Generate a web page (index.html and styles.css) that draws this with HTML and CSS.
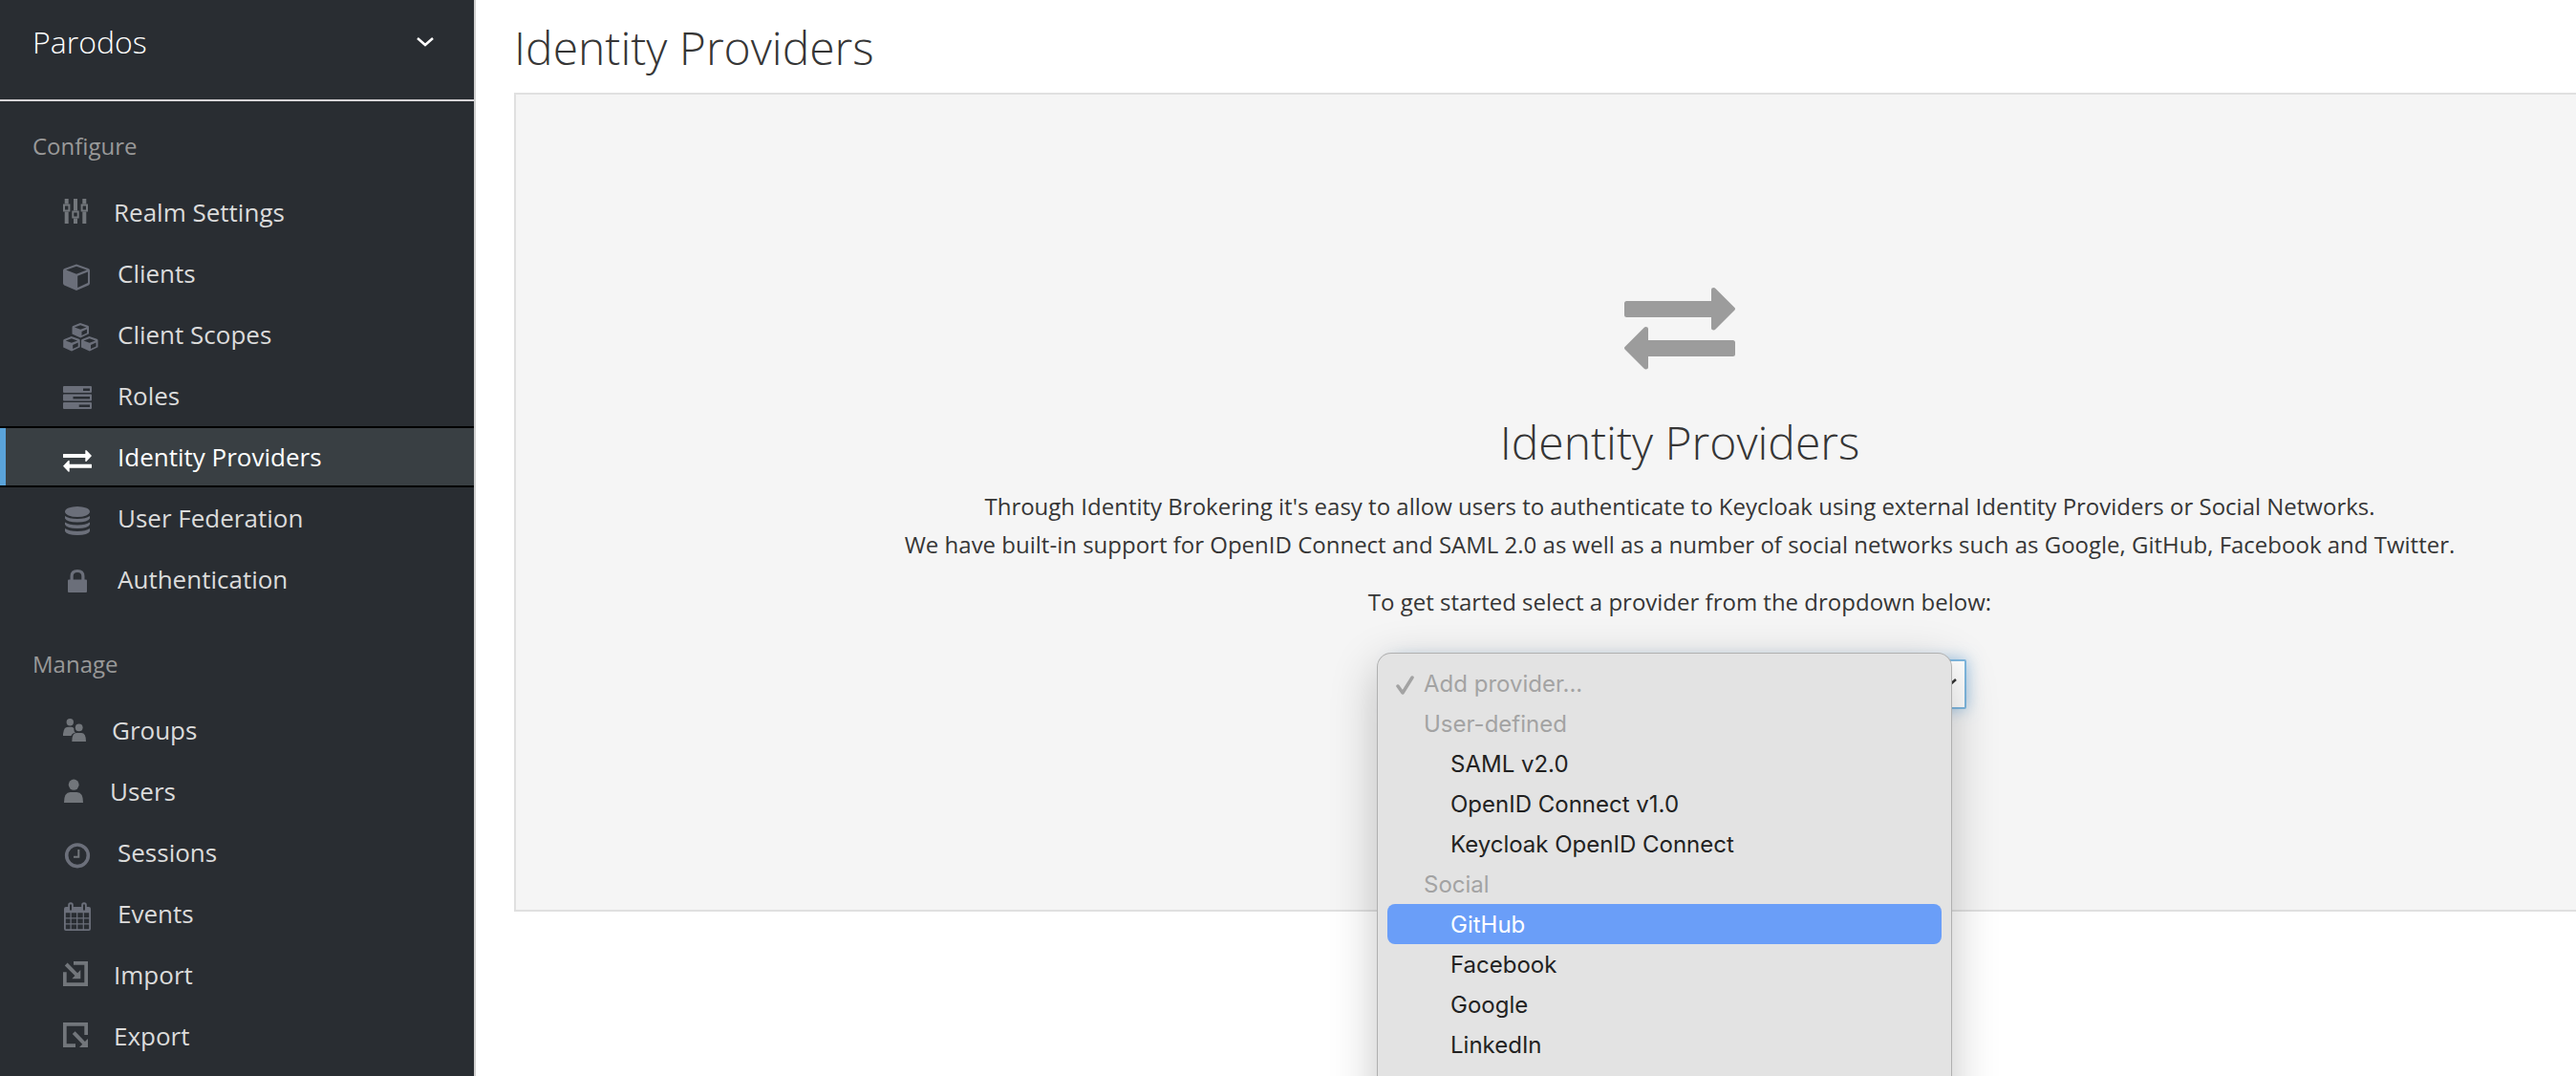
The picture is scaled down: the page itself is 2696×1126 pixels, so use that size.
FILE: index.html
```html
<!DOCTYPE html>
<html lang="en">
<head>
<meta charset="utf-8">
<title>Identity Providers</title>
<link rel="stylesheet" href="styles.css">
</head>
<body>
<div class="layout">
  <aside class="sidebar">
    <button class="realm" type="button">
      <span>Parodos</span>
      <svg class="realm-chevron" viewBox="0 0 18 10"><path d="M1 1l8 7 8-7"/></svg>
    </button>
    <nav>
      <h2 class="section">Configure</h2>
      <ul class="menu">
        <li><a class="item" href="#">
          <svg class="icon pf" viewBox="0 0 28 36"><path d="M1.7 4h4v5.500h-4zM1.700 17.500h4V30h-4zM11 4h4v12.500h-4zM11 24.500h4V30h-4zM20.300 4h4v5.500h-4zM20.300 17.500h4V30h-4z"/><path class="line" d="M1 10.500h5.400v6H1zM10.300 17.500h5.400v6h-5.400zM19.600 10.500H25v6h-5.400z"/></svg>
          Realm Settings</a></li>
        <li><a class="item" href="#">
          <svg class="icon fa" viewBox="0 0 32 36"><path fill-rule="evenodd" d="M14 8.500l12.500 4.500q1.500.6 1.500 2v13.500q0 1.300-1.200 1.900L14 36 1.200 30.400Q0 29.800 0 28.500V15q0-1.400 1.500-2zM14 10.700L3.200 14.500 14 18.700l10.800-4.200zM15.200 20.800v12.300l10.800-5V16.500z"/></svg>
          Clients</a></li>
        <li><a class="item" href="#">
          <svg class="icon fa" viewBox="0 0 32 36"><path id="cube" fill-rule="evenodd" d="M18 6l8 2.800q1 .4 1 1.500v7L18.300 21.500 9.500 17.500v-7q0-1.200 1-1.600zM18.200 8.200L12 10.500l6.200 2.300 6.200-2.300zM19.500 15v4l5.500-2.500v-4z"/><use href="#cube" x="-9.300" y="14"/><use href="#cube" x="9.500" y="14"/></svg>
          Client Scopes</a></li>
        <li><a class="item" href="#">
          <svg class="icon fa" viewBox="0 0 32 36"><path fill-rule="evenodd" d="M1 8h28q1 0 1 1v5q0 1-1 1H1q-1 0-1-1V9q0-1 1-1zM21 10.500V13h7v-2.500zM1 16.500h28q1 0 1 1v5q0 1-1 1H1q-1 0-1-1v-5q0-1 1-1zM10.500 19v2.500H28V19zM1 25h28q1 0 1 1v5q0 1-1 1H1q-1 0-1-1v-5q0-1 1-1zM16.700 27.500V30H28v-2.500z"/></svg>
          Roles</a></li>
        <li><a class="item active" href="#" aria-current="page">
          <svg class="icon fa" viewBox="0 0 32 36"><path d="M.5 15H23.300v-3.500q.5-1 1.500 0L30 17l-5.200 5.500q-1 1-1.500 0V19H.5q-.5 0-.5-.5v-3q0-.5.5-.5zM29.500 25.700H6.700V22.200q-.5-1-1.500 0L0 27.700l5.200 5.500q1 1 1.500 0v-3.500h22.800q.5 0 .5-.5v-3q0-.5-.5-.5z"/></svg>
          Identity Providers</a></li>
        <li><a class="item" href="#">
          <svg class="icon fa" viewBox="0 0 32 36"><ellipse cx="15" cy="11.500" rx="13" ry="5.500"/><path d="M2 16q4 3 13 3t13-3v2.500q-2 4-13 4t-13-4zM2 22.500q4 3 13 3t13-3V25q-2 4-13 4T2 25zM2 29q4 3 13 3t13-3v3q-2 4-13 4T2 32z"/></svg>
          User Federation</a></li>
        <li><a class="item" href="#">
          <svg class="icon fa" viewBox="0 0 32 36"><path fill-rule="evenodd" d="M7.500 18.500V15q0-7 7.500-7t7.500 7v3.500H24q1 0 1 1V31q0 1-1 1H6q-1 0-1-1V19.500q0-1 1-1zM10.700 18.500h8.600V15q0-4-4.300-4t-4.300 4z"/></svg>
          Authentication</a></li>
      </ul>
      <h2 class="section second">Manage</h2>
      <ul class="menu">
        <li><a class="item" href="#">
          <svg class="icon groups" viewBox="0 0 26 36"><circle cx="7.300" cy="9.700" r="3.700"/><circle cx="16.700" cy="15.300" r="3.900"/><path d="M0 24v-2q.5-7.300 5.500-7.300h3.500q1.500 0 2.500 1.800-.5 3 1.500 4.200Q9.500 21 8.500 24zM9.300 30q0-9 4.700-9h5.300q4.700 0 4.700 9z"/></svg>
          Groups</a></li>
        <li><a class="item" href="#">
          <svg class="icon users" viewBox="0 0 24 36"><ellipse cx="11.200" cy="11.200" rx="5.400" ry="5.600"/><path d="M1 30q0-11 6.500-11h7q6.500 0 6.500 11z"/></svg>
          Users</a></li>
        <li><a class="item" href="#">
          <svg class="icon fa" viewBox="0 0 32 36"><circle class="ring" cx="15" cy="21.300" r="11.300"/><path class="line" d="M16.300 15v7.700H11"/></svg>
          Sessions</a></li>
        <li><a class="item" href="#">
          <svg class="icon fa" viewBox="0 0 32 36"><path fill-rule="evenodd" d="M3 11h2.200V9q0-2.700 2.800-2.700T10.800 9v2h8.400V9q0-2.700 2.800-2.700T24.800 9v2H27q2 0 2 2v21q0 2-2 2H3q-2 0-2-2V13q0-2 2-2zM7 8.500v6h2v-6zM21 8.500v6h2v-6zM2.800 17.300v5h4.700v-5zM8.700 17.300v5h5.400v-5zM15.300 17.300v5h5.400v-5zM21.900 17.300v5h5.300v-5zM2.800 23.400v4.800h4.700v-4.800zM8.700 23.400v4.800h5.400v-4.800zM15.300 23.400v4.800h5.400v-4.800zM21.900 23.400v4.800h5.300v-4.800zM2.800 29.400v4.800h4.700v-4.800zM8.700 29.400v4.800h5.400v-4.800zM15.300 29.400v4.800h5.400v-4.800zM21.900 29.400v4.800h5.300v-4.800z"/></svg>
          Events</a></li>
        <li><a class="item" href="#">
          <svg class="icon pf" viewBox="0 0 28 36"><path d="M11 4h15v26H0V15.300h3.700v11h18.600V7.700H11zM4.600 5.600l10.500 10.700 3.200-3.200v9.200H9.300l3.100-3.200L1.800 8.400z"/></svg>
          Import</a></li>
        <li><a class="item" href="#">
          <svg class="icon pf" viewBox="0 0 28 36"><path d="M26 17V4H0v26h13v-3.700H3.700V7.700h18.600V17zM12.600 13.300l10.300 10.600L26 21v9h-9l3.200-3.200L9.800 16.100z"/></svg>
          Export</a></li>
      </ul>
    </nav>
  </aside>
  <main class="main">
    <h1 class="title">Identity Providers</h1>
    <section class="blank-slate">
      <svg class="hero-icon" viewBox="0 0 116 86"><path d="M2.500 14H91V2q0-2 2.500-2 1 0 2 1l20 20q1 1.200 0 2.400l-20 20q-1 1-2 1-2.500 0-2.500-2V31H2.500Q0 31 0 28.500v-12Q0 14 2.500 14zM113.500 55H25V43q0-2-2.500-2-1 0-2 1l-20 20q-1 1.200 0 2.400l20 20q1 1 2 1 2.500 0 2.500-2V72h88.500q2.500 0 2.500-2.500v-12q0-2.500-2.500-2.500z"/></svg>
      <h2 class="title">Identity Providers</h2>
      <p class="lead">Through Identity Brokering it's easy to allow users to authenticate to Keycloak using external Identity Providers or Social Networks.<br>We have built-in support for OpenID Connect and SAML 2.0 as well as a number of social networks such as Google, GitHub, Facebook and Twitter.</p>
      <label class="lead" for="provider">To get started select a provider from the dropdown below:</label>
      <div class="picker">
        <select class="picker-select" id="provider"><option>Add provider...</option></select>
        <svg class="picker-chevron" viewBox="0 0 18 10"><path d="M1 1l8 7 8-7"/></svg>
        <ul class="options" role="listbox" aria-label="Add provider">
          <li class="option head" role="option" aria-selected="true"><svg class="check" viewBox="0 0 20 20"><path d="M2 11l5 7L17 2"/></svg>Add provider...</li>
          <li class="option head" role="presentation">User-defined</li>
          <li class="option" role="option">SAML v2.0</li>
          <li class="option" role="option">OpenID Connect v1.0</li>
          <li class="option" role="option">Keycloak OpenID Connect</li>
          <li class="option head" role="presentation">Social</li>
          <li class="option highlighted" role="option">GitHub</li>
          <li class="option" role="option">Facebook</li>
          <li class="option" role="option">Google</li>
          <li class="option" role="option">LinkedIn</li>
        </ul>
      </div>
    </section>
  </main>
</div>
</body>
</html>
```
FILE: styles.css
```css
* { box-sizing: border-box; }

body {
  margin: 0;
  background: #fff;
  color: #363636;
  font-family: "Open Sans", sans-serif;
  font-size: 24px;
}

h1, h2, p, ul { margin: 0; padding: 0; font-weight: 400; }
ul { list-style: none; }

.layout {
  display: flex;
  height: 100vh;
  overflow: hidden;
}

/* Sidebar */
.sidebar {
  flex: 0 0 498px;
  background: #292d32;
  border-right: 2px solid #d1d1d1;
}

.realm {
  display: flex;
  justify-content: space-between;
  align-items: flex-start;
  width: 100%;
  height: 106px;
  padding: 22px 42px 0 34px;
  border: 0;
  border-bottom: 2px solid #d6d3d6;
  background: none;
  color: #fff;
  font: 300 32px/44px "Open Sans", sans-serif;
}

.realm-chevron { width: 18px; height: 10px; margin-top: 17px; }

.realm-chevron path, .picker-chevron path {
  fill: none;
  stroke: #fff;
  stroke-width: 2.5;
}

.section {
  padding: 30px 34px 20px;
  color: #999;
  font-size: 24px;
  line-height: 34px;
}

.section.second { padding-top: 40px; }

.item {
  display: flex;
  align-items: center;
  gap: 25px;
  height: 64px;
  padding-left: 66px;
  color: #dbdbdb;
  font-size: 26px;
  line-height: 36px;
  text-decoration: none;
}

.item.active {
  padding-left: 0;
  border: solid #000;
  border-width: 2px 0;
  background: #393f43;
  color: #fff;
}

.item.active::before {
  content: "";
  align-self: stretch;
  width: 6px;
  margin-right: 35px;
  background: #5aa3d9;
}

.icon { flex: none; height: 36px; overflow: visible; fill: #72767b; }
.icon.fa { width: 32px; fill: #6b6f7a; }
.icon.pf { width: 28px; }
.icon.groups { width: 26px; }
.icon.users { width: 24px; }
.active .icon.fa { fill: #fff; }
.icon .line { fill: none; stroke: #72767b; stroke-width: 2; }
.icon .ring { fill: none; stroke: #6b6f7a; stroke-width: 3.6; }

/* Content */
.main {
  flex: 1 0 auto;
  width: calc(100% - 216px);
  padding: 17px 0 0 40px;
}

.title {
  font-size: 48px;
  font-weight: 300;
  line-height: 66px;
}

.blank-slate {
  display: flex;
  flex-direction: column;
  align-items: center;
  margin-top: 14px;
  padding: 202px 40px 210px;
  border: 2px solid #e0e0e0;
  background: #f5f5f5;
  text-align: center;
}

.hero-icon { width: 116px; height: 86px; margin-bottom: 43px; fill: #9c9c9c; }

.lead { margin-top: 14px; line-height: 40px; }
.lead + .lead { margin-top: 20px; }

.picker {
  position: relative;
  width: 600px;
  height: 52px;
  margin-top: 40px;
}

.picker-select {
  width: 100%;
  height: 100%;
  padding: 0 20px;
  appearance: none;
  border: 2px solid #7fb8e0;
  border-radius: 2px;
  background: #fff;
  box-shadow: 0 0 16px rgba(90, 160, 220, .6);
  color: #363636;
  font: 24px "Open Sans", sans-serif;
}

.picker-chevron {
  position: absolute;
  top: 20px;
  right: 10px;
  width: 18px;
  height: 10px;
}

.picker-chevron path { stroke: #363636; }

.options {
  position: absolute;
  top: -6px;
  left: -16px;
  width: 600px;
  padding: 10px 10px 60px;
  border-radius: 14px;
  background: #e3e3e3;
  box-shadow: 0 0 0 1px #b0b0b0, 0 14px 50px rgba(0, 0, 0, .24);
  color: #222;
  font: 24px/40px Inter, sans-serif;
  text-align: left;
}

.option {
  display: flex;
  align-items: center;
  height: 42px;
  padding: 2px 0 0 66px;
}

.option.head { position: relative; padding-left: 38px; color: #a3a3a3; }
.option.highlighted { border-radius: 8px; background: #6a9ef8; color: #fff; }

.check {
  position: absolute;
  top: 13px;
  left: 9px;
  width: 20px;
  height: 20px;
  fill: none;
  stroke: #a3a3a3;
  stroke-width: 3.5;
  stroke-linecap: round;
  stroke-linejoin: round;
}
```
